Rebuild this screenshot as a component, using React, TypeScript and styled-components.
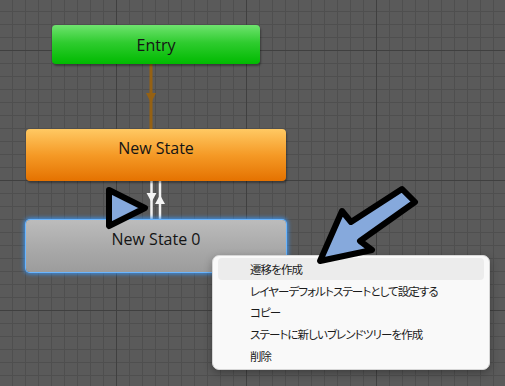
import React from "react";
import styled, { createGlobalStyle } from "styled-components";

const Global = createGlobalStyle`
  html, body { margin: 0; padding: 0; }
  body { width: 505px; height: 386px; overflow: hidden; }
`;

const Canvas = styled.div`
  position: relative;
  width: 505px;
  height: 386px;
  overflow: hidden;
  background-color: #5a5a5a;
  background-image:
    linear-gradient(to right, #404040 1px, transparent 1px),
    linear-gradient(to bottom, #404040 1px, transparent 1px),
    linear-gradient(to right, #4f4f4f 1px, transparent 1px),
    linear-gradient(to bottom, #4f4f4f 1px, transparent 1px);
  background-size: 130px 130px, 130px 130px, 13px 13px, 13px 13px;
  background-position: 116px 0, 0 50px, 12px 0, 0 11px;
  font-family: "Open Sans", "Liberation Sans", sans-serif;
`;

type Kind = "entry" | "orange" | "grey";

const fills: Record<Kind, string> = {
  entry: "linear-gradient(to bottom, #6fe36f 0%, #2fcc2f 45%, #00ba00 100%)",
  orange: "linear-gradient(to bottom, #ffc963 0%, #f59a26 50%, #e57200 100%)",
  grey: "linear-gradient(to bottom, #bcbcbc 0%, #a9a9a9 55%, #9c9c9c 100%)",
};

const Node = styled.div<{ $kind: Kind; $x: number; $y: number; $w: number; $h: number; $selected?: boolean }>`
  position: absolute;
  left: ${(p) => p.$x}px;
  top: ${(p) => p.$y}px;
  width: ${(p) => p.$w}px;
  height: ${(p) => p.$h}px;
  box-sizing: border-box;
  border-radius: 4px;
  background: ${(p) => fills[p.$kind]};
  display: flex;
  justify-content: center;
  align-items: ${(p) => (p.$kind === "entry" ? "center" : "flex-start")};
  padding-top: ${(p) => (p.$kind === "entry" ? 0 : 9)}px;
  color: #141414;
  font-size: 16px;
  line-height: 20px;
  box-shadow: ${(p) =>
    p.$selected
      ? "0 0 0 1px #6ab6ff, 0 0 4px 2px #3a8fe8"
      : "1px 2px 2px rgba(0,0,0,0.35)"};
`;

const Layer = styled.svg`
  position: absolute;
  left: 0;
  top: 0;
  width: 505px;
  height: 386px;
  pointer-events: none;
`;

const Menu = styled.div`
  position: absolute;
  left: 212px;
  top: 255px;
  width: 278px;
  box-sizing: border-box;
  padding: 2px 5px;
  background: #f9f9f9;
  border: 1px solid #d6d6d6;
  border-radius: 7px;
  box-shadow: 0 3px 8px rgba(0, 0, 0, 0.3);
  display: flex;
  flex-direction: column;
`;

const Item = styled.div<{ $active?: boolean }>`
  height: 21.8px;
  display: flex;
  align-items: center;
  padding-left: 32px;
  border-radius: 4px;
  font-family: "Noto Sans CJK JP", "Noto Sans CJK SC", sans-serif;
  font-size: 11.5px;
  font-feature-settings: "palt" 1;
  font-variant-east-asian: proportional-width;
  letter-spacing: -0.9px;
  color: #1b1b1b;
  background: ${(p) => (p.$active ? "#ececec" : "transparent")};
`;

export default function App() {
  return (
    <>
      <Global />
      <Canvas>
        <Layer viewBox="0 0 505 386">
          {/* Entry -> New State */}
          <line x1="151" y1="64" x2="151" y2="129" stroke="#956113" strokeWidth="3" />
          <polygon points="146,93 156,93 151,103" fill="#956113" />
          {/* New State <-> New State 0 */}
          <line x1="151.5" y1="181" x2="151.5" y2="220" stroke="#f2f2f2" strokeWidth="2.5" />
          <polygon points="146.5,193 156.5,193 151.5,202" fill="#f4f4f4" />
          <line x1="160" y1="181" x2="160" y2="220" stroke="#f2f2f2" strokeWidth="2.5" />
          <polygon points="155,204 165,204 160,195" fill="#f4f4f4" />
        </Layer>

        <Node $kind="entry" $x={52} $y={25} $w={208} $h={39}>Entry</Node>
        <Node $kind="orange" $x={26} $y={129} $w={260} $h={52}>New State</Node>
        <Node $kind="grey" $x={26} $y={220} $w={260} $h={52} $selected>New State 0</Node>

        <Menu>
          <Item $active>遷移を作成</Item>
          <Item>レイヤーデフォルトステートとして設定する</Item>
          <Item>コピー</Item>
          <Item>ステートに新しいブレンドツリーを作成</Item>
          <Item>削除</Item>
        </Menu>

        <Layer viewBox="0 0 505 386">
          <polygon
            points="109,190 145,208 109,226"
            fill="#86a9dc"
            stroke="#000"
            strokeWidth="6"
            strokeLinejoin="round"
          />
          <polygon
            points="402,189 415,202 360,241 372,250 320,261 342,211 351,222"
            fill="#86a9dc"
            stroke="#000"
            strokeWidth="6"
            strokeLinejoin="round"
          />
        </Layer>
      </Canvas>
    </>
  );
}
